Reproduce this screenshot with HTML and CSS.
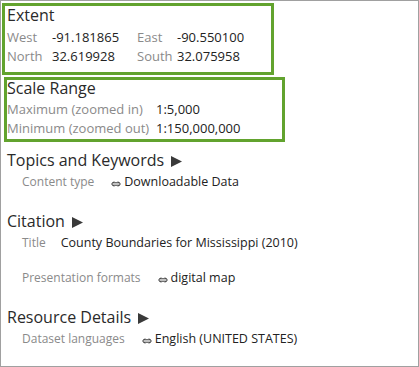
FILE: index.html
```html
<!DOCTYPE html>
<html lang="en">
<head>
<meta charset="UTF-8" />
<meta name="viewport" content="width=device-width, initial-scale=1" />
<title>Item Description</title>
<link rel="stylesheet" href="styles.css">
</head>
<body>

<div class="panel">

  <section class="box box-extent">
    <h3>Extent</h3>
    <div class="extent-grid">
      <span class="lbl">West</span><span class="val">-91.181865</span>
      <span class="lbl">East</span><span class="val">-90.550100</span>
      <span class="lbl">North</span><span class="val">32.619928</span>
      <span class="lbl">South</span><span class="val">32.075958</span>
    </div>
  </section>

  <section class="box box-scale">
    <h3>Scale Range</h3>
    <div class="scale-grid">
      <span class="lbl">Maximum (zoomed in)</span><span class="val">1:5,000</span>
      <span class="lbl">Minimum (zoomed out)</span><span class="val">1:150,000,000</span>
    </div>
  </section>

  <section class="group group-topics">
    <h3>Topics and Keywords <svg class="arrow" width="11" height="11" viewBox="0 0 11 11"><polygon points="0,0 11,5.5 0,11" /></svg></h3>
    <div class="row">
      <span class="lbl">Content type</span>
      <span class="val"><svg class="link" width="10" height="6" viewBox="0 0 10 6"><path d="M3 0.5 L0.6 3 L3 5.5 M7 0.5 L9.4 3 L7 5.5 M1.5 1.8 H8.5 M1.5 4.2 H8.5" /></svg>Downloadable Data</span>
    </div>
  </section>

  <section class="group group-citation">
    <h3>Citation <svg class="arrow" width="11" height="11" viewBox="0 0 11 11"><polygon points="0,0 11,5.5 0,11" /></svg></h3>
    <div class="row">
      <span class="lbl">Title</span>
      <span class="val">County Boundaries for Mississippi (2010)</span>
    </div>
    <div class="row row-spaced">
      <span class="lbl">Presentation formats</span>
      <span class="val"><svg class="link" width="10" height="6" viewBox="0 0 10 6"><path d="M3 0.5 L0.6 3 L3 5.5 M7 0.5 L9.4 3 L7 5.5 M1.5 1.8 H8.5 M1.5 4.2 H8.5" /></svg>digital map</span>
    </div>
  </section>

  <section class="group group-details">
    <h3>Resource Details <svg class="arrow" width="11" height="11" viewBox="0 0 11 11"><polygon points="0,0 11,5.5 0,11" /></svg></h3>
    <div class="row">
      <span class="lbl">Dataset languages</span>
      <span class="val"><svg class="link" width="10" height="6" viewBox="0 0 10 6"><path d="M3 0.5 L0.6 3 L3 5.5 M7 0.5 L9.4 3 L7 5.5 M1.5 1.8 H8.5 M1.5 4.2 H8.5" /></svg>English (UNITED STATES)</span>
    </div>
  </section>

</div>

</body>
</html>
```

FILE: styles.css
```css
body {
  margin: 0;
  font-family: 'Open Sans', 'Noto Sans', sans-serif;
  background: #fff;
}
.panel {
  width: 419px;
  height: 367px;
  box-sizing: border-box;
  border: 1px solid #a0a0a0;
  overflow: hidden;
}
h3 {
  margin: 0;
  font-size: 16px;
  font-weight: normal;
  line-height: 16px;
  color: #2a2a2a;
}
.lbl {
  color: #8a8a8a;
}
.val {
  color: #222;
}
.box {
  border: 3px solid #62a32e;
  box-sizing: border-box;
}
.box-extent {
  width: 272px;
  height: 72px;
  margin: 2px 0 0 1px;
  padding: 1px 0 0 2px;
}
.box-scale {
  width: 281px;
  height: 65px;
  margin: 2px 0 0 3px;
}
.extent-grid {
  display: grid;
  grid-template-columns: 45px 85px 40px auto;
  font-size: 13px;
  line-height: 19px;
  margin-top: 5px;
}
.scale-grid {
  display: grid;
  grid-template-columns: 149px auto;
  font-size: 13px;
  line-height: 19px;
  margin-top: 4px;
}
.group {
  padding-left: 6px;
}
.group h3 {
  line-height: 20px;
}
.group-topics {
  margin-top: 8px;
}
.group-citation {
  margin-top: 19px;
}
.group-details {
  margin-top: 19px;
}
.arrow {
  fill: #3a3a3a;
  margin-left: 3px;
  vertical-align: -1px;
}
.row {
  display: flex;
  align-items: baseline;
  gap: 15px;
  font-size: 12px;
  line-height: 20px;
  padding-left: 15px;
  margin-top: 2px;
}
.row .val {
  font-size: 12.5px;
}
.row-spaced {
  margin-top: 15px;
}
.link {
  fill: none;
  stroke: #333;
  stroke-width: 1;
  margin: 0 3px 0 2px;
  vertical-align: -1px;
}
```
